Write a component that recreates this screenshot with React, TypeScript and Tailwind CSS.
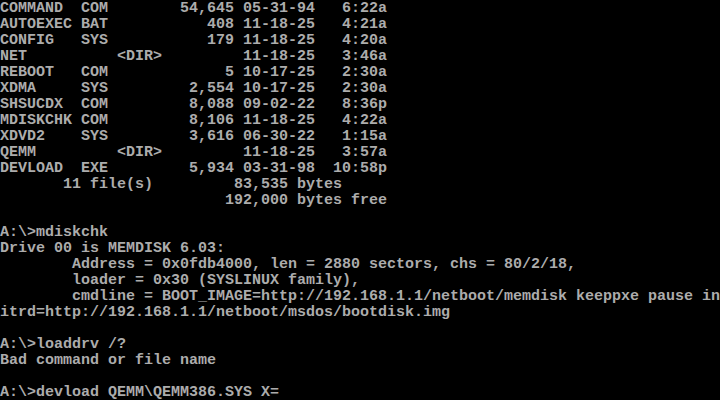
const pad = (s: string, n: number) => s + ' '.repeat(Math.max(0, n - s.length));
const lpad = (s: string, n: number) => ' '.repeat(Math.max(0, n - s.length)) + s;

type Entry = { name: string; ext: string; size: string | null; date: string; time: string };

const entries: Entry[] = [
  { name: 'COMMAND', ext: 'COM', size: '54,645', date: '05-31-94', time: '6:22a' },
  { name: 'AUTOEXEC', ext: 'BAT', size: '408', date: '11-18-25', time: '4:21a' },
  { name: 'CONFIG', ext: 'SYS', size: '179', date: '11-18-25', time: '4:20a' },
  { name: 'NET', ext: '', size: null, date: '11-18-25', time: '3:46a' },
  { name: 'REBOOT', ext: 'COM', size: '5', date: '10-17-25', time: '2:30a' },
  { name: 'XDMA', ext: 'SYS', size: '2,554', date: '10-17-25', time: '2:30a' },
  { name: 'SHSUCDX', ext: 'COM', size: '8,088', date: '09-02-22', time: '8:36p' },
  { name: 'MDISKCHK', ext: 'COM', size: '8,106', date: '11-18-25', time: '4:22a' },
  { name: 'XDVD2', ext: 'SYS', size: '3,616', date: '06-30-22', time: '1:15a' },
  { name: 'QEMM', ext: '', size: null, date: '11-18-25', time: '3:57a' },
  { name: 'DEVLOAD', ext: 'EXE', size: '5,934', date: '03-31-98', time: '10:58p' },
];

// one DIR row, laid out on the 80-column text grid
function dirLine(e: Entry) {
  const head = pad(e.name, 8) + ' ' + pad(e.ext, 3);
  const size = e.size === null ? pad(' <DIR>', 14) : lpad(e.size, 14);
  return head + size + ' ' + e.date + lpad(e.time, 8);
}

const lines: string[] = [
  ...entries.map(dirLine),
  '       11 file(s)         83,535 bytes',
  '                         192,000 bytes free',
  '',
  'A:\\>mdiskchk',
  'Drive 00 is MEMDISK 6.03:',
  '        Address = 0x0fdb4000, len = 2880 sectors, chs = 80/2/18,',
  '        loader = 0x30 (SYSLINUX family),',
  '        cmdline = BOOT_IMAGE=http://192.168.1.1/netboot/memdisk keeppxe pause in',
  'itrd=http://192.168.1.1/netboot/msdos/bootdisk.img',
  '',
  'A:\\>loaddrv /?',
  'Bad command or file name',
  '',
  'A:\\>devload QEMM\\QEMM386.SYS X=',
];

export default function App() {
  return (
    <div className="w-[720px] h-[400px] overflow-hidden bg-black text-[#acacac] font-['Liberation_Mono',monospace] font-bold text-[15px] leading-[16px]">
      {lines.map((l, i) => (
        <div key={i} className="h-4 whitespace-pre pt-px">
          {l}
        </div>
      ))}
    </div>
  );
}
